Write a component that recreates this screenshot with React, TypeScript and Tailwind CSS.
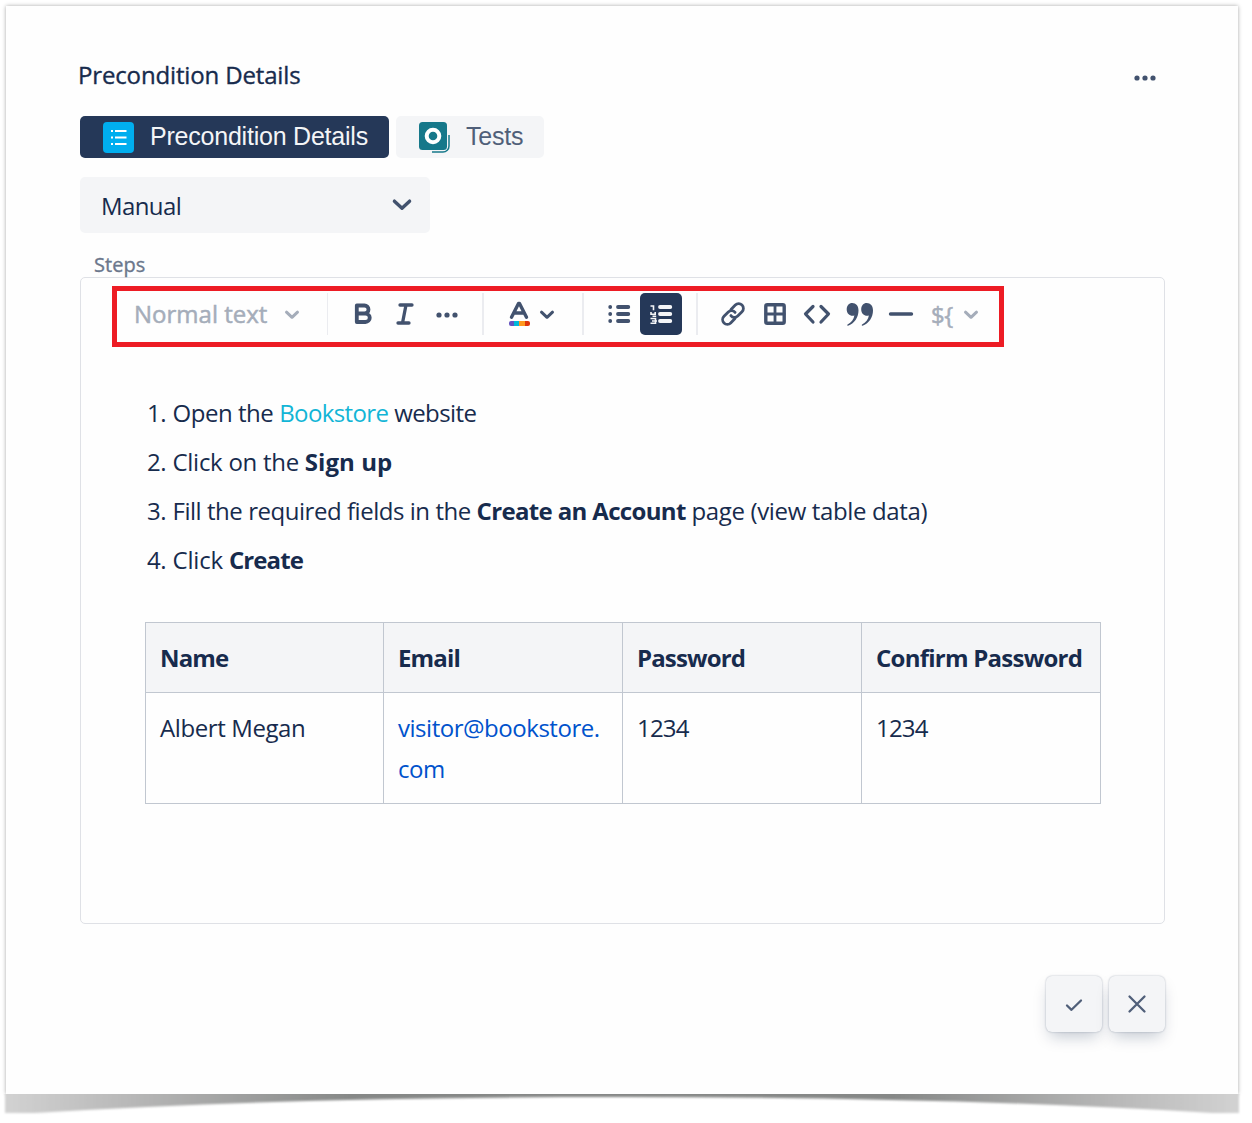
import React from "react";

const steps: React.ReactNode[] = [
  <>Open the <a className="tracking-[-0.6px] text-[#12b5d6]">Bookstore</a> <span className="tracking-[-0.6px]">website</span></>,
  <><span className="tracking-[-0.28px]">Click on the </span><b className="font-bold tracking-[0.05px]">Sign up</b></>,
  <>Fill the required fields in the <b className="font-bold tracking-[-0.65px]">Create an Account</b> <span className="tracking-[-0.36px]">page (view table data)</span></>,
  <><span className="tracking-[-0.2px]">Click </span><b className="font-bold tracking-[-0.9px]">Create</b></>,
];

function Chevron({ className, weight = 3 }: { className: string; weight?: number }) {
  return (
    <svg className={className} viewBox="0 0 16 10" fill="none" stroke="currentColor" strokeWidth={weight} strokeLinecap="round" strokeLinejoin="round">
      <path d="M2.500 2.200 8 7.300l5.500-5.100" />
    </svg>
  );
}

function Dots({ className }: { className: string }) {
  return (
    <svg className={className} viewBox="0 0 22 6" fill="currentColor">
      <circle cx="3" cy="3" r="2.6" />
      <circle cx="11" cy="3" r="2.6" />
      <circle cx="19" cy="3" r="2.6" />
    </svg>
  );
}

function Icon({ className, children }: { className?: string; children: React.ReactNode }) {
  return (
    <div className="flex h-[42px] w-[42px] shrink-0 items-center justify-center">
      <svg className={className ?? "h-7 w-7"} viewBox="0 0 28 28" fill="none" stroke="currentColor" strokeWidth="3" strokeLinecap="round" strokeLinejoin="round">
        {children}
      </svg>
    </div>
  );
}

function Toolbar() {
  return (
    <div className="ml-[31px] mt-2 flex h-[61px] w-[892px] items-start border-[5px] border-[#ed1c24] pt-[2px] text-[#42526e]">
      <div className="flex h-[42px] w-[211px] shrink-0 items-center border-r border-[#ebecf0] pl-[17px] text-[#a5adba]">
        <span className="w-[134px] whitespace-nowrap text-[24px] tracking-[0.01px] [-webkit-text-stroke:0.5px_currentColor]">Normal text</span>
        <Chevron className="ml-4 mt-[2px] h-[10px] w-4" />
      </div>
      <div className="flex h-[42px] w-[156px] shrink-0 items-center border-r-2 border-[#ebecf0] pl-[14px]">
        <Icon className="ml-px h-7 w-7">
          <path strokeWidth="3.800" d="M6.800 5.500h7.700a4 4 0 0 1 0 8H6.800zM6.800 13.500h8.700a4.200 4.200 0 0 1 0 8.500H6.800z" />
        </Icon>
        <Icon>
          <path strokeWidth="3.300" d="M9 5h12M7 23h11M15 5l-3.500 18" />
        </Icon>
        <div className="flex w-[42px] justify-center"><Dots className="mt-[2px] h-[6px] w-[22px]" /></div>
      </div>
      <div className="flex h-[42px] w-[100px] shrink-0 items-center border-r-2 border-[#ebecf0] pl-[14px]">
        <Icon>
          <path strokeWidth="3.400" d="M6.500 17.300 13.500 3.500h1L21.500 17.300M9 13h10" />
          <g stroke="none">
            <path fill="#6554c0" d="M6 21h3v5H6a2 2 0 0 1-2-2v-1a2 2 0 0 1 2-2z" />
            <path fill="#00b8d9" d="M9 21h5v5H9z" />
            <path fill="#ff991f" d="M14 21h6v5h-6z" />
            <path fill="#de350b" d="M20 21h3a2 2 0 0 1 2 2v1a2 2 0 0 1-2 2h-3z" />
          </g>
        </Icon>
        <Chevron className="-ml-px mt-[2px] h-[10px] w-4" />
      </div>
      <div className="flex h-[42px] w-[114px] shrink-0 items-center border-r-2 border-[#ebecf0] pl-[14px]">
        <Icon>
          <path strokeWidth="3.800" d="M13 7h10.300M13 14h10.300M13 21h10.300" />
          <path strokeWidth="3.800" d="M5.200 7h.01M5.200 14h.01M5.200 21h.01" />
        </Icon>
        <div className="flex rounded-[5px] bg-[#253858] text-[#f4f5f7]">
          <Icon>
            <path strokeWidth="3.800" d="M13 7h10.300M13 14h10.300M13 21h10.300" />
            <path strokeWidth="1.600" strokeLinecap="butt" strokeLinejoin="miter" d="M3.500 6h3v4.300M4 12v2.300h4.200V12M5.500 16.300h3.700M3.500 18.500h5v4.800H3.500M5 21h5" />
          </Icon>
        </div>
      </div>
      <div className="flex h-[42px] shrink-0 items-center pl-[14px]">
        <Icon>
          <g strokeWidth="2.800">
            <path d="M12 9.500 16.300 5.100a4.700 4.700 0 0 1 6.700 6.700l-4.300 4.300a4.500 4.500 0 0 1-6.800-.5" />
            <path d="M16 18.500 11.700 22.900A4.700 4.700 0 0 1 5 16.200l4.300-4.300a4.500 4.500 0 0 1 6.800.5" />
          </g>
        </Icon>
        <Icon>
          <rect x="4.800" y="4.800" width="18.400" height="18.400" rx="1.500" strokeWidth="3.400" />
          <path strokeWidth="2.800" d="M14 5v18M5 14h18" />
        </Icon>
        <Icon>
          <path strokeWidth="3.200" d="M10 6.500 2.500 14l7.500 8M18 6.500l7.500 7.500-7.500 8" />
        </Icon>
        <Icon className="ml-px h-7 w-7">
          <path stroke="none" fill="currentColor" d="M6.200 3C10 3 12.500 5.800 12.500 10.500c0 7-4.200 13-10.500 15.200-.8.2-1-.7-.4-1.100 3.800-2.300 6.100-5.200 6.800-9.200-3.800 1.200-7.700-1.400-7.700-6C.7 5.700 3 3 6.200 3zM20.700 3C24.500 3 27 5.800 27 10.500c0 7-4.200 13-10.500 15.200-.8.2-1-.7-.4-1.100 3.800-2.300 6.100-5.200 6.800-9.200-3.800 1.200-7.700-1.400-7.700-6C15.200 5.700 17.500 3 20.700 3z" />
        </Icon>
        <Icon>
          <path strokeWidth="3.400" d="M3.500 14h21" />
        </Icon>
        <span className="ml-[9px] w-[23px] pt-px text-[24px] tracking-[-0.5px] text-[#a5adba] [-webkit-text-stroke:0.5px_currentColor]">{"${"}</span>
        <Chevron className="ml-[9px] mt-[2px] h-[10px] w-4 text-[#a5adba]" />
      </div>
    </div>
  );
}

const th = "border border-[#c1c7d0] bg-[#f4f5f7] h-[70px] px-[14px] pt-0 text-left align-middle font-bold tracking-[-0.85px] whitespace-nowrap";
const td = "border border-[#c1c7d0] h-[111px] px-[14px] pt-[14px] align-top";

export default function App() {
  return (
    <div className="h-[1123px] w-[1252px] overflow-hidden bg-white pl-[6px] pt-[6px] font-['Open_Sans','Noto_Sans',sans-serif] text-[#172b4d]">
      <main className="h-[1088px] w-[1232px] bg-[#fefefe] px-[74px] pt-[50px] shadow-[0_0_4px_rgba(0,0,0,0.35)]">
        <header className="flex h-[40px] items-center justify-between pr-2">
          <h1 className="-ml-[2px] -mt-[2px] text-[24px] tracking-[-0.15px] [-webkit-text-stroke:0.35px_currentColor]">Precondition Details</h1>
          <Dots className="mt-[4px] h-[6px] w-[22px] text-[#42526e]" />
        </header>
        <nav className="mt-5 flex gap-[7px] font-['Liberation_Sans',Arial,sans-serif] text-[25px] tracking-[-0.22px]">
          <button className="flex h-[42px] w-[309px] items-center rounded-[5px] bg-[#253858] pl-[23px] text-[#f4f5f7]">
            <svg className="mr-4 h-[31px] w-[31px] shrink-0" viewBox="0 0 31 31">
              <rect width="31" height="31" rx="4" fill="#00aeef" />
              <path stroke="#fff" strokeWidth="2" d="M8 9h2M12 9h11.500M8 15.500h2M12 15.500h11.500M8 22h2M12 22h11.500" />
            </svg>
            <span className="whitespace-nowrap">Precondition Details</span>
          </button>
          <button className="flex h-[42px] w-[148px] items-center rounded-[5px] bg-[#f4f5f7] pl-[23px] text-[#505f79]">
            <svg className="mr-4 h-[31px] w-[31px] shrink-0" viewBox="0 0 31 31">
              <rect width="28" height="28" rx="3.500" fill="#16788a" />
              <circle cx="14" cy="14" r="6.300" fill="none" stroke="#fff" strokeWidth="4" />
              <path d="M30 13v11a6 6 0 0 1-6 6H13" fill="none" stroke="#16788a" strokeWidth="1.500" />
            </svg>
            <span>Tests</span>
          </button>
        </nav>
        <div className="mt-[19px] flex h-14 w-[350px] items-center justify-between rounded-[5px] bg-[#f4f5f7] pl-[21px] pr-[17px]">
          <span className="pt-[2px] text-[24px] tracking-[-0.6px]">Manual</span>
          <Chevron className="h-[14px] w-[22px] text-[#42526e]" weight={2.5} />
        </div>
        <div className="mt-[17px] flex h-[27px] items-center pl-[14px] pt-[2px] text-[20px] tracking-[0.05px] text-[#6b778c] [-webkit-text-stroke:0.35px_currentColor]">Steps</div>
        <section className="h-[647px] w-[1085px] rounded-[5px] border border-[#dfe1e6]">
          <Toolbar />
          <ol className="ml-[66px] mt-[41px] text-[24px] tracking-[-0.46px]">
            {steps.map((s, i) => (
              <li key={i} className="flex h-[49px] items-center whitespace-nowrap">
                <span className="w-[25.500px] shrink-0">{i + 1}.</span>
                <span>{s}</span>
              </li>
            ))}
          </ol>
          <table className="ml-[64px] mt-[38px] w-[956px] table-fixed border-collapse text-[24px] leading-[41px] tracking-[-0.4px]">
            <colgroup>
              <col className="w-[238px]" />
              <col className="w-[239px]" />
              <col className="w-[239px]" />
              <col className="w-[239px]" />
            </colgroup>
            <thead>
              <tr>
                <th className={th}>Name</th>
                <th className={th}>Email</th>
                <th className={th}>Password</th>
                <th className={th}><span className="tracking-[-0.75px]">Confirm Password</span></th>
              </tr>
            </thead>
            <tbody>
              <tr>
                <td className={td}>Albert Megan</td>
                <td className={td}><a className="whitespace-nowrap tracking-[-0.47px] text-[#0052cc]">visitor@bookstore.<br />com</a></td>
                <td className={td}><span className="tracking-[-0.8px]">1234</span></td>
                <td className={td}><span className="tracking-[-0.8px]">1234</span></td>
              </tr>
            </tbody>
          </table>
        </section>
        <footer className="mt-[52px] flex gap-[7px] pl-[966px] text-[#505f79]">
          <button className="flex h-[56px] w-[56px] shrink-0 items-center justify-center rounded-[6px] bg-[#f4f5f7] shadow-[0_8px_16px_-4px_rgba(9,30,66,0.25),0_0_2px_rgba(9,30,66,0.31)]">
            <svg className="mt-px h-7 w-7" viewBox="0 0 28 28" fill="none" stroke="currentColor" strokeWidth="2.300" strokeLinecap="round" strokeLinejoin="round"><path d="m7 14.500 4.500 4.300L21 9.500" /></svg>
          </button>
          <button className="flex h-[56px] w-[56px] shrink-0 items-center justify-center rounded-[6px] bg-[#f4f5f7] shadow-[0_8px_16px_-4px_rgba(9,30,66,0.25),0_0_2px_rgba(9,30,66,0.31)]">
            <svg className="h-7 w-7" viewBox="0 0 28 28" fill="none" stroke="currentColor" strokeWidth="2.300" strokeLinecap="round"><path d="m6.500 6.500 15 15m0-15-15 15" /></svg>
          </button>
        </footer>
      </main>
      <svg className="-ml-[6px] h-[29px] w-[1252px]" viewBox="0 0 1252 29">
        <defs>
          <linearGradient id="curl" x1="0" x2="1">
            <stop offset="0" stopColor="#d2d2d2" />
            <stop offset="0.100" stopColor="#b8b8b8" />
            <stop offset="0.280" stopColor="#868887" />
            <stop offset="0.720" stopColor="#868887" />
            <stop offset="0.900" stopColor="#b8b8b8" />
            <stop offset="1" stopColor="#d2d2d2" />
          </linearGradient>
          <filter id="soft" x="-1%" y="-30%" width="102%" height="160%"><feGaussianBlur stdDeviation="1.200" /></filter>
        </defs>
        <path fill="url(#curl)" filter="url(#soft)" d="M5-6H1239V19H1212C1020 7 820 3 622 3S224 7 35 19H5z" />
      </svg>
    </div>
  );
}
